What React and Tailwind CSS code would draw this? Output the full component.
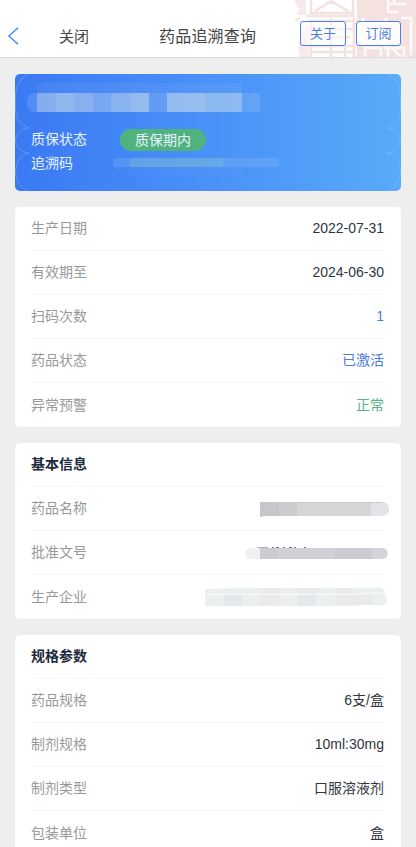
import React from "react";

const infoRows = [
  { label: "生产日期", value: "2022-07-31" },
  { label: "有效期至", value: "2024-06-30" },
  { label: "扫码次数", value: "1", tone: "text-[#4a7ce0]" },
  { label: "药品状态", value: "已激活", tone: "text-[#4a7ce0]" },
  { label: "异常预警", value: "正常", tone: "text-[#55b586]" },
];

const specRows = [
  { label: "药品规格", value: "6支/盒" },
  { label: "制剂规格", value: "10ml:30mg" },
  { label: "制剂类型", value: "口服溶液剂" },
  { label: "包装单位", value: "盒" },
];

function Seal() {
  return (
    <svg className="absolute right-0 top-0 h-[57px] w-[124px]" viewBox="292 0 124 57" fill="none">
      <path d="M357 0H416V58H357Z" fill="#f5e1e0" />
      <path d="M294 0H306V15H296L299 9ZM293 19L301 17L298 22ZM300 27H309V58H300L298 48L301 38Z" fill="#f8eae9" />
      <g stroke="#f4e2e1" strokeWidth="2.500">
        <path d="M311 0V13H353V0M315 11L331 1L348 11M331 0V4M306 16H355" />
        <path d="M309 21H355M309 29H353M312 37H350M309 46H355M312 52H355M311 21V58M331 18V58M345 21V58M354 18V58" />
      </g>
      <g stroke="#fffafa" strokeWidth="2.500">
        <path d="M388 0V12H398M388 4H406M394 0V4M401 18H411V55M363 18V47M365 57V48H381V57M371 25H401M371 32H401M371 39H401M386 18V50M398 22V44M388 57V48H404V57M392 48L401 57" />
      </g>
    </svg>
  );
}

function Header() {
  return (
    <header className="relative flex h-[58px] shrink-0 border-b border-[#dcdcdc] bg-white pt-[20px]">
      <Seal />
      <svg className="absolute left-[7px] top-[27px] h-[18px] w-[12px]" viewBox="0 0 12 18" fill="none" stroke="#5587e8" strokeWidth="1.500">
        <path d="M11 .7L2 9L11 17.3" />
      </svg>
      <span className="ml-[59px] mt-[5px] text-[15px] leading-[23px]">关闭</span>
      <span className="ml-[70px] mt-[5px] w-[98px] whitespace-nowrap text-[16px] leading-[23px] tracking-[0.2px]">药品追溯查询</span>
      <div className="relative ml-[43px] mt-px flex gap-[10px] text-[13px] leading-[23px] text-[#4c7fdc]">
        <button className="h-[25px] w-[46px] rounded-[3px] border border-[#4c82e6] bg-white/60">关于</button>
        <button className="h-[25px] w-[45px] rounded-[3px] border border-[#4c82e6] bg-white/90">订阅</button>
      </div>
    </header>
  );
}

function StatusCard() {
  return (
    <section className="relative h-[117px] shrink-0 overflow-hidden rounded-[5px] bg-linear-to-r from-[#3b79f3] via-[#4b93f8] via-55% to-[#59aaf8] text-[14px] text-[#e8f1ff]">
      <svg className="absolute inset-0 h-full w-full" viewBox="0 0 386 117" fill="none">
        <g stroke="#a4d6ff" strokeOpacity=".3">
          <path d="M13 0C4 5 .5 13 .5 24V36C1 45 6 52 14 54C6 55 1 60 .5 67C1 74 6 78 14 79C6 80 1 88 .5 97C1 106 5 113 12 117" />
          <path d="M373 0C382 5 385.500 13 385.500 24V36C385 45 380 52 372 54C380 55 385 60 385.500 67C385 74 380 78 372 79C380 80 385 88 385.500 97C385 106 381 113 374 117" />
        </g>
        <path d="M22 19V12L25 9H227V19" fill="#fff" fillOpacity=".06" />
        <path d="M22 19H18Q12 21 12 28Q12 36 17 38H22Z" fill="#fff" fillOpacity=".12" />
        <g fill="#d6e4e8">
          <path fillOpacity=".48" d="M22 19H41V38H22ZM59 19H78V38H59ZM96 19H115V38H96Z" />
          <path fillOpacity=".55" d="M41 19H59V38H41ZM115 19H134V38H115ZM152 19H190V38H152Z" />
          <path fillOpacity=".37" d="M78 19H96V38H78Z" />
          <path fillOpacity=".2" d="M134 19H152V38H134Z" />
          <path fillOpacity=".48" d="M190 19H227V38H190Z" />
          <path fillOpacity=".16" d="M227 19H245V38H227Z" />
        </g>
        <rect x="98" y="84" width="166" height="9" rx="3" fill="#b9d5ed" fillOpacity=".17" />
        <path d="M115 84H208V93H115Z" fill="#85c5bd" fillOpacity=".28" />
        <path d="M100 93H227V101H115V96H100Z" fill="#fff" fillOpacity=".025" />
      </svg>
      <div className="relative flex flex-col px-4 pt-[55px]">
        <div className="flex h-[22px] items-center">
          <span className="w-[89px]">质保状态</span>
          <span className="h-[22px] w-[86px] rounded-full bg-[#50b37e] text-center leading-[22px]">质保期内</span>
        </div>
        <div className="mt-px h-[22px] leading-[22px]">追溯码</div>
      </div>
    </section>
  );
}

function Row({ label, children }) {
  return (
    <div className="flex h-11 items-center justify-between border-b border-[#f5f5f5] pr-px pt-px last:border-b-0">
      <span className="text-[#999]">{label}</span>
      {children}
    </div>
  );
}

function Panel({ title, children }) {
  return (
    <section className="shrink-0 rounded-[5px] bg-white px-4 text-[14px]">
      {title && <h2 className="flex h-11 items-center border-b border-[#f5f5f5] font-bold text-[#202b3c]">{title}</h2>}
      {children}
    </section>
  );
}

function NameMask() {
  return (
    <svg className="-mr-[5px] h-4 w-[130px]" viewBox="0 0 130 16" fill="none">
      <path d="M1 1H123A7 7 0 0 1 123 15H5L1 16Z" fill="#d5d6d8" />
      <path d="M1 1H20V15H5L1 16Z" fill="#c6c7ca" />
      <path d="M20 1H38V15H20Z" fill="#cbccce" />
      <path d="M38 1H75V15H38Z" fill="#d5d7d6" />
      <path d="M112 1H123A7 7 0 0 1 123 15H112Z" fill="#e2e4e7" />
      <path d="M1 1.500H123" stroke="#c5cad0" />
    </svg>
  );
}

function ApprovalMask() {
  return (
    <svg className="-mr-[4px] h-[14px] w-[143px]" viewBox="0 0 143 14" fill="none">
      <rect y="2" width="143" height="11" rx="5.500" fill="#eff2f2" />
      <path d="M15 2H137A5.500 5.500 0 0 1 137 13H15Z" fill="#d0d1d4" />
      <path d="M15 2H33V13H15ZM89 2H127V13H89Z" fill="#cbccd0" />
      <path d="M127 2H137A5.500 5.500 0 0 1 137 13H127Z" fill="#d3d5d8" />
      <path d="M12 1.500H23" stroke="#aaafc0" />
      <path d="M27 1.500H29M31 1.500H34M38 1.500H40M44 1.500H47M49 1.500H51M59 1.500H61" stroke="#77777b" />
    </svg>
  );
}

function CompanyMask() {
  return (
    <svg className="-mr-[3px] h-5 w-[182px]" viewBox="0 0 182 20" fill="none">
      <path d="M0 4Q0 2 3 2L34 1H169Q179 -2 180 6V8Q182 9 182 12Q182 18 176 18H157L150 19H0Z" fill="#ecefef" />
      <path d="M19 8H37V19H19ZM93 8H111V19H93Z" fill="#e5e8eb" />
      <path d="M56 1H74V19H56ZM93 1H111V7H93ZM130 1H148V7H130Z" fill="#e8eaeb" />
      <path d="M130 8H168V18H130Z" fill="#e9eaeb" />
      <path d="M0 7.500H148L156 6H180" stroke="#f9fafa" />
    </svg>
  );
}

export default function App() {
  return (
    <main className="flex h-[847px] w-[416px] flex-col overflow-hidden bg-[#eee] font-['Liberation_Sans','Noto_Sans_CJK_SC',sans-serif] text-[#444]">
      <Header />
      <div className="flex min-h-0 flex-1 flex-col gap-4 overflow-hidden px-[15px] pt-[15.500px]">
        <StatusCard />
        <Panel>
          {infoRows.map(({ label, value, tone = "text-[#303640]" }) => (
            <Row key={label} label={label}><span className={tone}>{value}</span></Row>
          ))}
        </Panel>
        <Panel title="基本信息">
          <Row label="药品名称"><NameMask /></Row>
          <Row label="批准文号"><ApprovalMask /></Row>
          <Row label="生产企业"><CompanyMask /></Row>
        </Panel>
        <Panel title="规格参数">
          {specRows.map(({ label, value }) => (
            <Row key={label} label={label}><span className="text-[#303640]">{value}</span></Row>
          ))}
        </Panel>
      </div>
    </main>
  );
}
